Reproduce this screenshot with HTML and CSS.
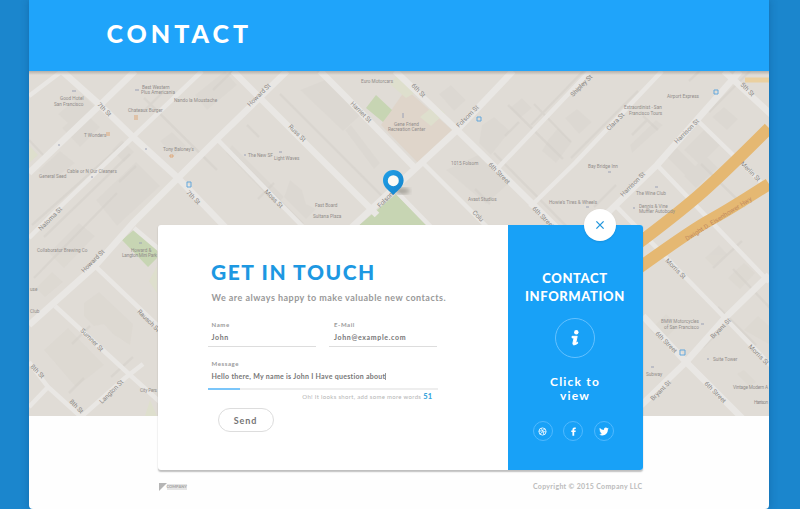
FILE: index.html
```html
<!DOCTYPE html>
<html lang="en">
<head>
<meta charset="utf-8">
<title>Contact</title>
<link rel="stylesheet" href="styles.css">
</head>
<body>
<div class="page">
  <header class="header"><h1>CONTACT</h1></header>
  <svg class="map" viewBox="29 71 740 345">
    <defs>
      <linearGradient id="top" x1="0" y1="0" x2="0" y2="1"><stop offset="0" stop-color="#85807c" stop-opacity=".5"/><stop offset="1" stop-color="#85807c" stop-opacity="0"/></linearGradient>
      <linearGradient id="pin" x1="0" y1="0" x2="1" y2="1"><stop offset="0" stop-color="#21a0e8"/><stop offset="1" stop-color="#1583ca"/></linearGradient>
      <filter id="soft"><feGaussianBlur stdDeviation="2"/></filter>
    </defs>
    <rect x="29" y="71" width="740" height="345" fill="#e0dcd6"/>
    <g class="blocks">
      <path d="M70 104l13-9 12 12-22 21-15-14zM38 171l22-20 15 12-22 17zM112 150l10-10 12 12-10 10zM160 141l12-9 14 14-12 10z"/>
      <path d="M62 128l20-18 18 17-20 20zM96 200l40-38 24 24-43 40zM195 95l30-24 12 14-30 25z"/>
      <path d="M232 145l52 52-8 8-50-52zM290 180l12 10 4 14 10 5-10 10-22-22zM345 130l6-5 29 38-6 6zM333 121l16-14 4 4-16 14z"/>
      <path d="M439 94l12-9 15 15-12 11zM482 125l12-8 16 14-19 24-12-12zM510 108l12-10 10 10-12 10zM548 140l10-12 14 14-16 21-14-12zM565 118l12-9 15 13-13 12z"/>
      <path d="M630 145l26-25 7 5-31 28zM684 150l20-20 16 15-20 20zM712 117l12-10 14 12-11 11zM684 176l22-20 12 12-22 20z"/>
      <path d="M49 253l30-30 16 13-31 32zM36 288l16-16 11 10-18 15zM84 303l15-11 34 32-3 21-17-11-9-10-10 2-10-10zM44 350l24-22 36 37-28 22z"/>
      <path d="M705 258l14-13 8 9-14 12zM728 278l16-15 11 10-15 16zM650 330l16-16 12 12-16 16zM744 330l14-14 11 10v18zM744 370l12 12-7 4-12-12z"/>
      <path d="M665 155l30 30 10-9-28-28zM446 170l32-15 30 29-22 20zM300 90l30-12 34 34-21 19z"/>
    </g>
    <g class="lines">
      <path d="M29 140l16 17m-13 68l92-82m-80 94l86-83m-96 124l83-85m27-95l73 72m-4-80l34-33m-48 101l33-31m0 26l71 71m-23-130l113 113m-82-143l88 88m-111 78l37 39m169-116l79 80m-65-128l55 54m-30-89l55-49m-57 104l61-63m-21 96l67-67m-104 13l37 38m118-61l71-68m-51 99l61-61m-69 113l44 43m-8-48l43 41m-67 68l29-27m-24 66l38 38m-23-76l38 40m-592-8l64 63m-45-102l55 54"/>
      <path d="M145 110l17-17m-43 89l17-16m111-41l12 12m77-49l14 14m-92 97l16-16m231-47l14-14m-44 67l15 15m142-69l15-15m-53 87l22-22m27-69l15 14m45 217l15-15m-646 12l18-18m21 51l22-20m-64 36l15-15"/>
    </g>
    <path fill="#dfd5ca" d="M406 89l47 42-33 34-39-40z"/>
    <path fill="#dedfcd" d="M400 72l-10 12 16 14 12-7zM420 117l15-12 10 8-14 13zM29 145l9 10-9 8zM157 266v27l-8-12zM150 400l7 16h-12z"/>
    <path fill="#c7d5b3" d="M376 95l16 15-9 12-17-14zM396 194l31 32h-69zM136 228l21 20v10l-9 9-26-27z"/>
    <g class="roads">
      <path class="w" d="M62 71L100 105L133 137L178 178L226 228M135 71L100 105L29 173M287 71L217 139L178 178L134 222L95 266L29 325M233 71L260 98L377 215M320 71L345 96L415 168M513 71L457 130L350 229M395 71L457 130L498 170L557 228M740 71L657 165L590 230M724 71L775 118M769 275L725 318L686 362L630 416M643 316L686 362L744 420"/>
      <path d="M202 71L133 137L62 205L29 238M62 71L29 96M217 139L304 228M395 190L432 228M422 162L490 230M590 71L498 168M662 71L575 163L530 207M697 120L769 190M657 165L769 282M615 205L725 318L774 369M95 266L160 328M55 306L130 375L160 402M143 364L125 378L80 418M29 362L48 387L80 416M48 387L29 407M134 228l26 22"/>
    </g>
    <g class="highway">
      <path d="M769 128Q720 177 698 196T636 245M769 184Q727 211 710 220T636 270" stroke="#e5b872" stroke-width="12"/>
      <path d="M745 80h24" stroke="#ead0a0" stroke-width="5"/>
    </g>
    <g class="street">
      <text transform="translate(97 105) rotate(45)">7th St</text><text transform="translate(186 193) rotate(45)">7th St</text>
      <text transform="translate(41 231) rotate(-45)">Natoma St</text><text transform="translate(250 107) rotate(-45)">Howard St</text>
      <text transform="translate(288 127) rotate(45)">Russ St</text><text transform="translate(264 192) rotate(45)">Moss St</text>
      <text transform="translate(350 104) rotate(45)">Harriet St</text><text transform="translate(380 208) rotate(-45)">Folsom</text>
      <text transform="translate(411 86) rotate(45)">6th St</text><text transform="translate(459 128) rotate(-45)">Folsom St</text>
      <text transform="translate(488 165) rotate(45)">6th Street</text><text transform="translate(532 209) rotate(45)">6th Street</text>
      <text transform="translate(573 97) rotate(-45)">Shipley St</text><text transform="translate(609 131) rotate(-45)">Clara St</text>
      <text transform="translate(677 144) rotate(-45)">Harrison St</text><text transform="translate(623 197) rotate(-45)">Harrison St</text>
      <text transform="translate(740 85) rotate(45)">5th St</text><text transform="translate(740 164) rotate(45)">Merlin St</text>
      <text transform="translate(665 261) rotate(45)">Morris St</text><text transform="translate(655 334) rotate(45)">6th Street</text>
      <text transform="translate(713 339) rotate(-45)">Bryant St</text><text transform="translate(653 401) rotate(-45)">Bryant St</text>
      <text transform="translate(704 384) rotate(45)">6th Street</text><text transform="translate(748 347) rotate(45)">Morris St</text>
      <text transform="translate(84 273) rotate(-45)">Howard St</text><text transform="translate(80 331) rotate(45)">Sumner St</text>
      <text transform="translate(137 312) rotate(45)">Rausch St</text><text transform="translate(102 404) rotate(-45)">Langton St</text>
      <text transform="translate(30 367) rotate(45)">8th St</text><text transform="translate(69 402) rotate(45)">8th St</text>
      <text transform="translate(472 213) rotate(45)">Colu</text>
      <text class="freeway" transform="translate(687 241) rotate(-32)" textLength="77">Dwight D. Eisenhower Hwy</text>
    </g>
    <g class="place">
      <text x="60" y="100">Good Hotel</text><text x="54" y="106">San Francisco</text><text x="142" y="89">Best Western</text><text x="141" y="94">Plus Americania</text>
      <text x="128" y="112">Chateaux Burger</text><text x="174" y="102">Nando la Moustache</text><text x="84" y="137">T Wonders</text>
      <text x="163" y="151">Tony Baloney's</text><text x="67" y="173">Cable or N Our Cleaners</text><text x="39" y="178">General Seed</text>
      <text x="248" y="157">The New SF</text><text x="274" y="160">Light Waves</text><text x="361" y="83">Euro Motorcars</text>
      <text x="394" y="126">Gene Friend</text><text x="388" y="131">Recreation Center</text><text x="315" y="207">Fast Board</text><text x="313" y="218">Sultana Plaza</text>
      <text x="451" y="165">1015 Folsom</text><text x="468" y="201">Avast Studios</text><text x="549" y="204">Howie's Tires &amp; Wheels</text>
      <text x="588" y="168">Bay Bridge Inn</text><text x="624" y="109">Extraordinist - San</text><text x="629" y="115">Francisco Tours</text>
      <text x="667" y="98">Airport Express</text><text x="636" y="195">The Wine Club</text><text x="639" y="208">Dennis &amp; Vine</text><text x="639" y="213">Muffler Autobody</text>
      <text x="37" y="252">Collaborator Brewing Co</text><text x="131" y="252">Howard &amp;</text><text x="122" y="257" textLength="35">Langton Mini Park</text>
      <text x="661" y="323">BMW Motorcycles</text><text x="664" y="329">of San Francisco</text><text x="713" y="361">Suite Tower</text><text x="646" y="376">Subway</text>
      <text x="733" y="389" textLength="35">Vintage Modern A</text><text x="754" y="404" textLength="14">Harrison</text><text x="140" y="392" textLength="17">City Pers</text><text x="30" y="291">use</text><text x="30" y="313">Club</text>
    </g>
    <g fill="none" stroke-width="1"><path stroke="#62a7dc" d="M187 182h4v5h-4zM714 90h4v4h-4zM477 117h4v4h-4zM680 350h5v5h-5z"/><path stroke="#dda778" d="M137 115v5m-2-5v5M107 132v4m2-4v4M170 155h3v2h-3z"/><path stroke="#9aa0b5" d="M72 91h4M135 90h4M58 145h2M145 149h2M91 177h2M279 152h3M244 155h2M403 113v5M608 172h3M701 324h3M655 187h3M633 208h2M651 367h3M139 243h3M586 207h3M707 359h2"/></g>
    <rect x="29" y="71" width="740" height="4" fill="url(#top)"/>
    <ellipse cx="402" cy="191" rx="8" ry="3" fill="#7c796f" opacity=".6" filter="url(#soft)"/>
    <path d="M393.300 170c-6 0-10.300 4.500-10.300 10.300 0 6 4 8.800 10.300 14.700 6.200-5.900 10.300-8.700 10.300-14.700 0-5.800-4.300-10.300-10.300-10.300z" fill="url(#pin)"/>
    <circle cx="393.300" cy="180.700" r="5.500" fill="#fafaf5"/>
  </svg>
  <main class="card">
    <form class="form">
      <h2>GET IN TOUCH</h2>
      <p class="lead">We are always happy to make valuable new contacts.</p>
      <div class="row">
        <div class="field"><span class="label">Name</span><span class="value">John</span></div>
        <div class="field email"><span class="label">E-Mail</span><span class="value">John@example.com</span></div>
      </div>
      <div class="field message"><span class="label">Message</span><span class="value">Hello there, My name is John I Have question about<i class="caret"></i></span></div>
      <div class="bar"><div class="progress"></div></div>
      <p class="hint"><span>Oh! It looks short, add some more words</span> <b>51</b></p>
      <button type="button">Send</button>
    </form>
    <aside class="info">
      <div class="close"><svg width="10" height="10" viewBox="0 0 10 10"><path d="M1.400 1.400l7.200 7.200m0-7.200L1.400 8.600" stroke="#2095dc" stroke-width="1.300" fill="none"/></svg></div>
      <h3>CONTACT<br>INFORMATION</h3>
      <div class="circle"><svg width="12" height="18" viewBox="0 0 12 18"><circle cx="7.300" cy="3.200" r="2.200" fill="#fff"/><path d="M3 7.300h5.200L6.900 13.300q-.1 1 1.700-.2v1.300q-5.300 3.200-4.700-.4l1.100-4.800-2-.4z" fill="#fff" stroke="#fff" stroke-width=".9"/></svg></div>
      <p class="view">Click to<br>view</p>
      <div class="social">
        <span><svg width="9" height="9" viewBox="0 0 10 10" fill="none" stroke="#fff" stroke-width=".9"><circle cx="5" cy="5" r="4"/><path d="M3.400 1.400Q6 4.600 6.700 8.600M1 4.700Q5.500 5 7.800 2M2.400 8Q4.300 4.300 9 5.500"/></svg></span>
        <span><svg width="9" height="9" viewBox="0 0 10 10"><path d="M3.800 9.800V5.600H2.500V3.900h1.300V2.800Q3.800.5 6 .5h1.500v1.700h-.9q-.8 0-.8.8v.9h1.700l-.2 1.700H5.800v4.200z" fill="#fff"/></svg></span>
        <span><svg width="10" height="9" viewBox="0 0 24 20"><path d="M23.600 2.700q-1.300.6-2.700.8 1.500-.9 2.100-2.600-1.400.8-3 1.200A4.800 4.800 0 0 0 11.800 6.500Q5.900 6.200 2 1.400A4.800 4.800 0 0 0 3.500 7.800q-1.200 0-2.200-.6 0 3.700 3.800 4.800-1 .3-2.100.1 1 3.100 4.500 3.400Q4.400 17.900.4 17.400 4 19.600 7.800 19.600C16 19.600 21.600 13 21.200 5.200q1.400-1 2.400-2.500z" fill="#fff"/></svg></span>
      </div>
    </aside>
  </main>
  <footer class="footer">
    <div class="logo"><svg width="8" height="8" viewBox="0 0 8 8"><path d="M0 0h8L3 5 0 8z" fill="#b5b5b5"/></svg><span>COMPANY</span></div>
    <span class="copy">Copyright © 2015 Company LLC</span>
  </footer>
</div>
</body>
</html>
```
FILE: styles.css
```css
* { box-sizing: border-box; }
body {
  margin: 0;
  height: 509px;
  overflow: hidden;
  background: #1b86cd;
  font-family: Lato, "Liberation Sans", sans-serif;
}
h1, h2, h3, p { margin: 0; }
.page {
  width: 740px;
  height: 509px;
  margin-left: 29px;
  background: #fefefe;
  border-radius: 0 0 4px 4px;
  box-shadow: 0 0 8px rgba(0, 50, 100, .3);
}
.header {
  height: 71px;
  padding: 17px 0 0 77.500px;
  background: #1fa4fa;
}
h1 {
  color: #fff;
  font-size: 25px;
  line-height: 32px;
  font-weight: 900;
  letter-spacing: 4px;
}
.map { display: block; width: 740px; height: 345px; }
.blocks { fill: #d9d5cf; opacity: .45; }
.lines { fill: none; stroke: #d0ccc6; stroke-width: 2.500; opacity: .38; }
.roads { fill: none; stroke: #e9e7e4; stroke-width: 4.500; stroke-linejoin: round; }
.roads .w { stroke-width: 6.500; }
.highway { fill: none; }
.street { font-family: Roboto, sans-serif; font-size: 6.400px; fill: #8a8784; }
.street .freeway { fill: #c28b60; }
.place { font-family: Roboto, sans-serif; font-size: 4.700px; fill: #918d8a; }
.card {
  position: relative;
  display: flex;
  width: 485px;
  height: 245px;
  margin: -191px 0 0 128.500px;
  background: #fff;
  border-radius: 3px;
  box-shadow: 0 1.500px 1.500px rgba(0, 0, 0, .25);
}
.form { width: 350px; padding: 33px 0 0 50px; }
h2 {
  padding-left: 3.500px;
  color: #1d98e2;
  font-size: 21px;
  line-height: 28px;
  font-weight: 900;
  letter-spacing: 1.550px;
}
.lead {
  margin: 5px 0 14px 4px;
  color: #999;
  font-size: 9px;
  line-height: 14px;
  font-weight: 700;
  letter-spacing: .47px;
  white-space: nowrap;
}
.row { display: flex; gap: 13px; }
.field {
  display: flex;
  flex-direction: column;
  width: 108px;
  height: 28px;
  padding-left: 4px;
  border-bottom: 1px solid #ddd;
  white-space: nowrap;
}
.email { padding-left: 5.500px; }
.label { color: #999; font-size: 6px; line-height: 11px; font-weight: 700; letter-spacing: .6px; }
.value { color: #777; font-size: 7px; line-height: 14px; font-weight: 700; letter-spacing: .65px; }
.message { margin-top: 11px; width: 230px; border: 0; height: 30px; }
.message .value { font-size: 7px; letter-spacing: .28px; }
.caret { display: inline-block; width: 1px; height: 7px; background: #999; vertical-align: -1px; }
.bar { width: 230px; height: 2px; background: #eee; }
.progress { width: 32px; height: 2px; background: #7bc6fa; }
.hint {
  width: 225px;
  text-align: right;
  color: #b4b4b4;
  font-size: 6px;
  line-height: 14px;
  letter-spacing: .32px;
  white-space: nowrap;
}
.hint b { color: #38a5dc; font-size: 7.500px; font-weight: 900; }
button {
  display: block;
  width: 56px;
  height: 24px;
  margin: 4px 0 0 10px;
  padding: 0;
  background: #fff;
  border: 1.500px solid #ddd;
  border-radius: 12px;
  color: #757575;
  font: 700 9px Lato, sans-serif;
  letter-spacing: .9px;
}
.info {
  position: relative;
  width: 135px;
  padding-top: 44px;
  background: #18a1f7;
  border-radius: 0 3px 3px 0;
  color: #fff;
  text-align: center;
}
.close {
  position: absolute;
  top: -16px;
  left: 76.500px;
  display: grid;
  place-items: center;
  width: 32px;
  height: 32px;
  background: #fff;
  border-radius: 50%;
  box-shadow: 0 1px 2px rgba(0, 0, 0, .1);
}
h3 { font-size: 13px; line-height: 18px; font-weight: 900; letter-spacing: .6px; }
.circle {
  display: grid;
  place-items: center;
  width: 40px;
  height: 40px;
  margin: 13px auto 0;
  border: 1.500px solid #64c1ff;
  border-radius: 50%;
}
.view {
  margin-top: 17px;
  font-size: 12px;
  line-height: 14px;
  font-weight: 700;
  letter-spacing: 1.200px;
}
.social { display: flex; justify-content: center; gap: 10.500px; margin: 18px 4px 0 0; }
.social span {
  display: grid;
  place-items: center;
  width: 20px;
  height: 20px;
  border: 1.500px solid #50b9ff;
  border-radius: 50%;
}
.footer {
  display: flex;
  justify-content: space-between;
  width: 485px;
  margin: 10px 0 0 128.500px;
  color: #bbb;
  font-size: 7px;
  line-height: 12px;
}
.logo { display: flex; align-items: center; padding: 2px 0 0 1px; font-size: 4px; font-weight: 900; }
.logo span { height: 6px; line-height: 6px; background: #e5e5e5; color: #a5a5a5; }
.copy { font-weight: 700; letter-spacing: .32px; }
```
